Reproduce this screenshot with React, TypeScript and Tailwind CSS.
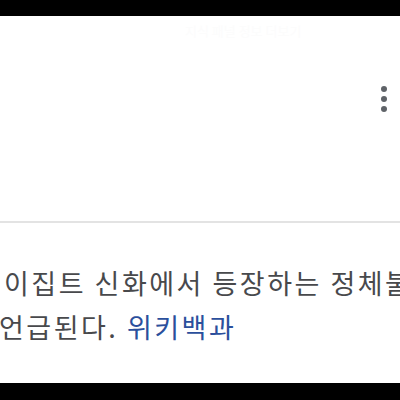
const FONT = { fontFamily: '"Noto Sans CJK KR", "Noto Sans", sans-serif' }

export default function App() {
  return (
    <div className="w-[400px] h-[400px] flex flex-col bg-white overflow-hidden" style={FONT}>
      {/* top bar */}
      <div className="h-4 bg-black shrink-0" />

      {/* header */}
      <div className="h-[205px] shrink-0 flex flex-col">
        <div className="h-[24px] pl-[185px] pt-[8px] text-[13px] leading-none text-[#fcfcfc] whitespace-nowrap">
          지식 패널 정보 더보기
        </div>
        <div className="flex justify-end pr-[13px] pt-[46px]">
          <div className="flex flex-col gap-[4px]">
            <span className="w-[6px] h-[6px] rounded-full bg-[#5f6368]" />
            <span className="w-[6px] h-[6px] rounded-full bg-[#5f6368]" />
            <span className="w-[6px] h-[6px] rounded-full bg-[#5f6368]" />
          </div>
        </div>
      </div>

      <div className="h-[2px] bg-[#e3e3e3] shrink-0" />

      {/* description */}
      <div className="flex-1 pt-[38px] text-[27px] leading-[44px] tracking-[2.5px] text-[#48494c] whitespace-nowrap overflow-hidden">
        <div className="pl-[4px]">이집트 신화에서 등장하는 정체불</div>
        <div className="-ml-[1px]">
          언급된다. <span className="text-[#2b4f9c]">위키백과</span>
        </div>
      </div>

      {/* bottom bar */}
      <div className="h-[17px] bg-black shrink-0" />
    </div>
  )
}
